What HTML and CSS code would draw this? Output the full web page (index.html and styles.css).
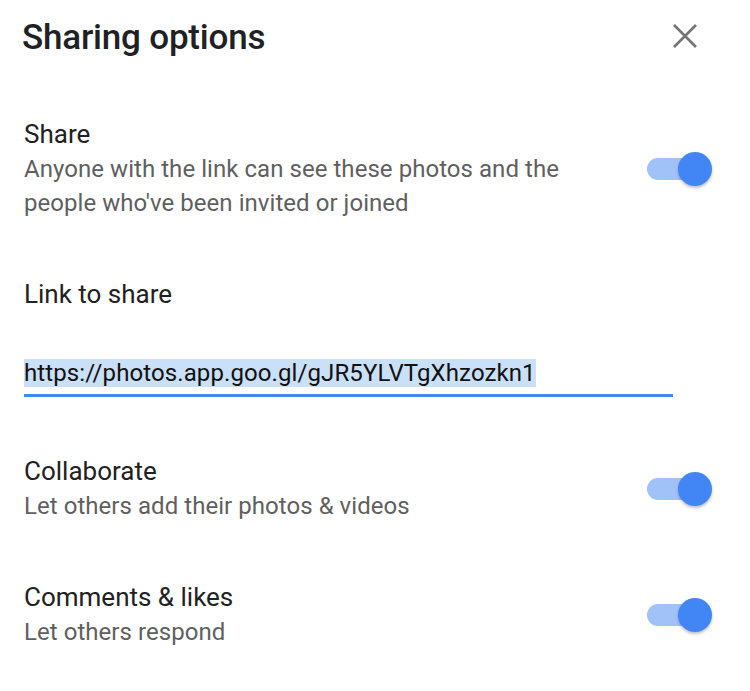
FILE: index.html
```html
<!DOCTYPE html>
<html lang="en">
<head>
<meta charset="utf-8">
<title>Sharing options</title>
<link rel="stylesheet" href="styles.css">
</head>
<body>
<div class="dialog">
  <header class="head">
    <h1 class="title">Sharing options</h1>
    <button class="close" aria-label="Close">
      <svg width="24" height="24" viewBox="0 0 24 24"><path d="M1 1L23 23M23 1L1 23" stroke="#757575" stroke-width="2.6" fill="none"/></svg>
    </button>
  </header>

  <section class="row">
    <div class="text">
      <div class="label">Share</div>
      <div class="desc">Anyone with the link can see these photos and the people who've been invited or joined</div>
    </div>
    <span class="toggle"><span class="track"></span><span class="knob"></span></span>
  </section>

  <section class="link">
    <div class="label">Link to share</div>
    <div class="field"><span class="sel">https://photos.app.goo.gl/gJR5YLVTgXhzozkn1</span></div>
  </section>

  <section class="row">
    <div class="text">
      <div class="label">Collaborate</div>
      <div class="desc">Let others add their photos &amp; videos</div>
    </div>
    <span class="toggle"><span class="track"></span><span class="knob"></span></span>
  </section>

  <section class="row">
    <div class="text">
      <div class="label">Comments &amp; likes</div>
      <div class="desc">Let others respond</div>
    </div>
    <span class="toggle"><span class="track"></span><span class="knob"></span></span>
  </section>
</div>
</body>
</html>
```

FILE: styles.css
```css
html, body {
  margin: 0;
  padding: 0;
  background: #ffffff;
}

body {
  font-family: Roboto, "Noto Sans", "Liberation Sans", sans-serif;
  color: #202124;
}

.dialog {
  width: 750px;
  height: 691px;
  box-sizing: border-box;
  padding: 16px 38px 0 24px;
  display: flex;
  flex-direction: column;
  gap: 58px;
}

.head {
  display: flex;
  align-items: center;
  justify-content: space-between;
  height: 40px;
  margin-bottom: 4px;
}

.title {
  margin: 3px 0 0 -2px;
  font-size: 35px;
  line-height: 40px;
  font-weight: 500;
  color: #202124;
  letter-spacing: -0.2px;
}

.close {
  border: 0;
  background: transparent;
  padding: 0;
  width: 24px;
  height: 24px;
  margin-right: 15px;
  display: flex;
}

.row {
  display: flex;
  align-items: center;
  justify-content: space-between;
}

.text {
  width: 572px;
}

.label {
  font-size: 26px;
  line-height: 32px;
  color: #212121;
}

.desc {
  margin-top: 2px;
  font-size: 24px;
  line-height: 34px;
  color: #5f5f5f;
  letter-spacing: 0.05px;
}

.toggle {
  position: relative;
  width: 65px;
  height: 34px;
  flex: none;
}

.track {
  position: absolute;
  left: 0;
  top: 6px;
  width: 54px;
  height: 22px;
  border-radius: 11px;
  background: #a1c2f9;
}

.knob {
  position: absolute;
  right: 0;
  top: 0;
  width: 34px;
  height: 34px;
  border-radius: 50%;
  background: #4285f4;
  box-shadow: 0 2px 3px rgba(0, 0, 0, 0.25);
}

.link {
  display: flex;
  flex-direction: column;
}

.field {
  margin-top: 49px;
  width: 649px;
  font-size: 24px;
  line-height: 28px;
  padding-bottom: 7px;
  border-bottom: 3px solid #4285f4;
  color: #111111;
  letter-spacing: 0.1px;
}

.sel {
  background: #c9e0f8;
}
```
